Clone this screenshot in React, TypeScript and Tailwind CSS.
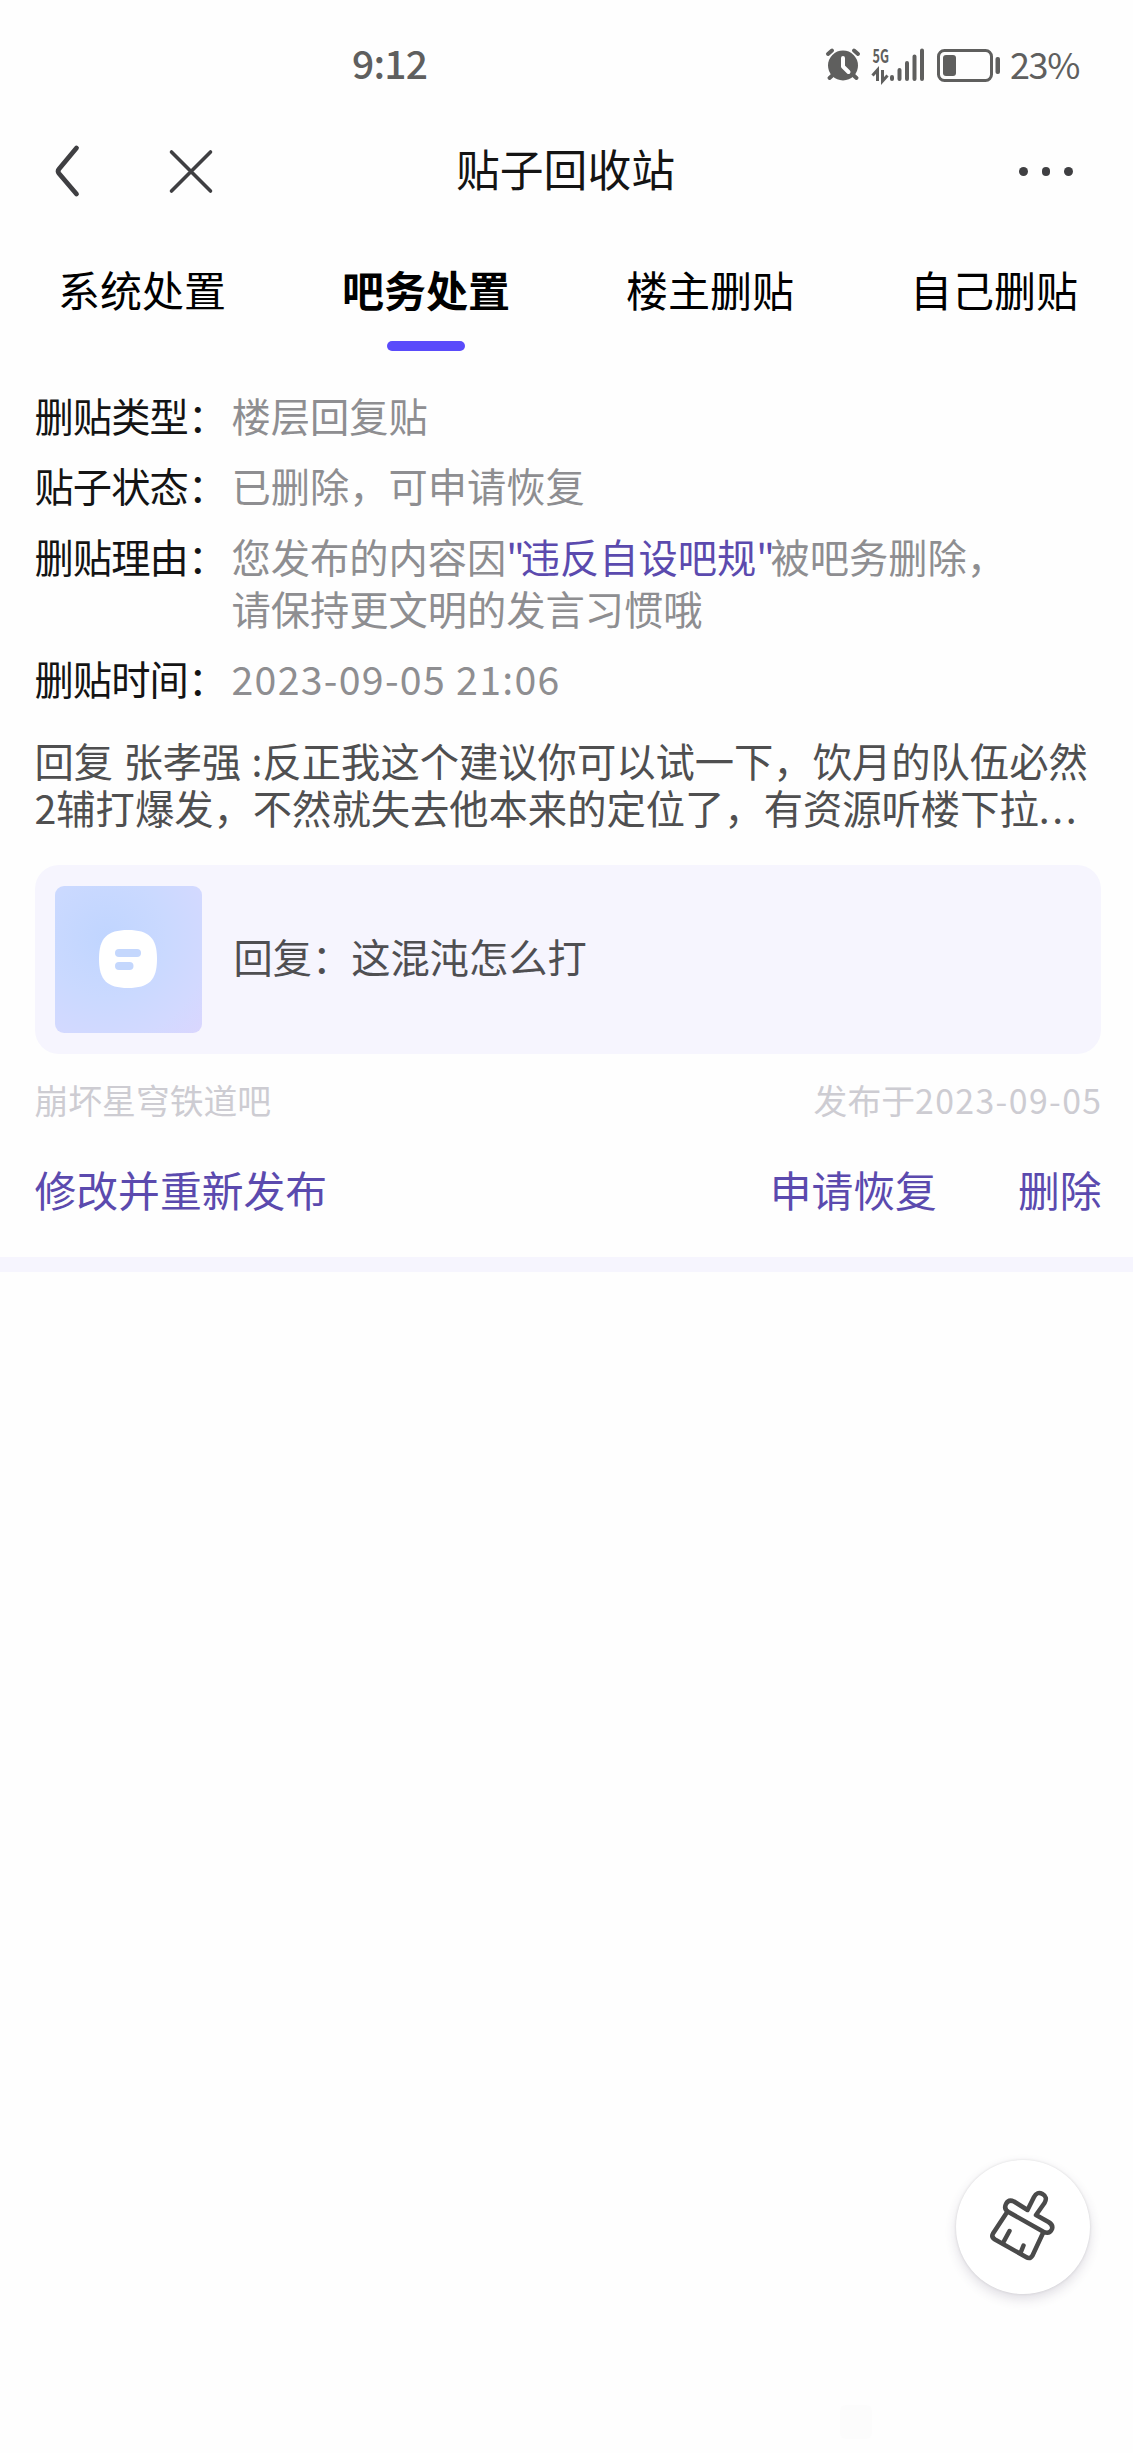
/**
 * @fileoverview Recycle bin page for deleted posts: category tabs, details of
 * the deleted post, and the actions available for it.
 */

import type { ReactNode } from "react";

const TABS = ["系统处置", "吧务处置", "楼主删贴", "自己删贴"];
const ACTIVE_TAB = "吧务处置";

/**
 * System status bar with the clock, alarm, signal and battery.
 */
function StatusBar() {
  return (
    <div className="flex h-[130px] items-center justify-between pr-[54px] pl-[352px] text-[39px] text-[#5f5f5e]">
      <span className="-mt-1.5 font-medium tracking-[-0.8px]">9:12</span>
      <div className="flex items-center">
        <svg width="180" height="60" viewBox="823 34 180 60" fill="none">
          {/* alarm clock */}
          <g stroke="#5f5f5e" strokeWidth="4" strokeLinecap="round">
            <path d="M828 53l4-3.500M858 53l-4-3.500M834 73l-4.500 4M852 73l4.500 4" />
          </g>
          <circle cx="843" cy="64.500" r="15" fill="#5f5f5e" />
          <path
            d="M843 57v8.500l5.500 5.500"
            stroke="#fff"
            strokeWidth="4"
            strokeLinecap="round"
            strokeLinejoin="round"
          />
          {/* mobile network */}
          <text
            x="872.500"
            y="62"
            fill="#5f5f5e"
            fontSize="19"
            fontWeight="700"
            textLength="16.500"
            lengthAdjust="spacingAndGlyphs"
          >
            5G
          </text>
          <path
            d="M872.500 74.500l5-5.500v11M882.500 69v11l5-5.500"
            stroke="#5f5f5e"
            strokeWidth="3"
          />
          <g stroke="#5f5f5e" strokeWidth="4" strokeLinecap="round">
            <path d="M892 76v2M899.500 69v9M907 62v16M914.500 55.500v22.500M922 49.500v28.500" />
          </g>
          {/* battery */}
          <rect
            x="938.500"
            y="49.500"
            width="53"
            height="30"
            rx="6"
            stroke="#5f5f5e"
            strokeWidth="3"
          />
          <rect x="943" y="54" width="13" height="21" rx="3" fill="#5f5f5e" />
          <rect x="995.500" y="56" width="4.500" height="17" rx="2" fill="#5f5f5e" />
        </svg>
        <span className="-mt-1 ml-[7px] w-[69px] text-[36px] tracking-[-1.4px]">
          23%
        </span>
      </div>
    </div>
  );
}

function Header() {
  return (
    <header className="flex h-[83px] items-center justify-between pr-[60px] pl-[52px]">
      <svg
        width="166"
        height="60"
        viewBox="52 141.500 166 60"
        fill="none"
        stroke="#3f3f42"
        strokeLinecap="round"
        strokeLinejoin="round"
      >
        <path d="M76.500 147.500L59 168.500Q57.200 170.700 59 173L76.500 193.500" strokeWidth="4.800" />
        <path d="M171.500 151.500L210.500 190.500M210.500 151.500L171.500 190.500" strokeWidth="3.600" />
      </svg>
      <h1 className="-mt-1.5 text-[43.8px] text-[#141414]">贴子回收站</h1>
      <div className="flex w-[160px] justify-end gap-[14px]">
        <span className="size-[8.500px] rounded-full bg-[#3f3f42]" />
        <span className="size-[8.500px] rounded-full bg-[#3f3f42]" />
        <span className="size-[8.500px] rounded-full bg-[#3f3f42]" />
      </div>
    </header>
  );
}

function Tabs() {
  return (
    <nav className="grid w-[1136px] grid-cols-4 pt-[46px]">
      {TABS.map((tab) => (
        <div key={tab} className="flex flex-col items-center">
          <span
            className={`text-[42px] leading-[60px] text-black ${
              tab === ACTIVE_TAB ? "font-bold" : ""
            }`}
          >
            {tab}
          </span>
          {tab === ACTIVE_TAB && (
            <span className="mt-[22px] h-[10px] w-[78px] rounded-full bg-[#5a4bfb]" />
          )}
        </div>
      ))}
    </nav>
  );
}

/**
 * One labelled line of the deletion details.
 */
function DetailRow({ label, children }: { label: string; children: ReactNode }) {
  return (
    <div className="flex">
      <dt className="w-[197px] shrink-0 text-[#141414]">
        <span className="tracking-[-0.9px]">{label}</span>：
      </dt>
      <dd className="text-[#8e8e91]">{children}</dd>
    </div>
  );
}

function Thumbnail() {
  return (
    <div className="flex size-[147px] items-center justify-center rounded-[9px] bg-[radial-gradient(circle_at_35%_35%,#c0d5ff_0%,#cad9ff_45%,#d2d9ff_75%,#dad6fe_100%)]">
      <svg width="58" height="58" viewBox="0 0 58 58">
        <path
          d="M29 0C50 0 58 8 58 29S50 58 29 58 0 50 0 29 8 0 29 0Z"
          fill="#fff"
        />
        <rect x="16" y="19" width="26" height="8" rx="4" fill="#c4d7fd" />
        <rect x="16" y="32" width="18.500" height="8" rx="4" fill="#c4d7fd" />
      </svg>
    </div>
  );
}

function CleanButton() {
  return (
    <button className="absolute top-[2160px] left-[956px] flex size-[134px] items-center justify-center rounded-full bg-white shadow-[0_5px_12px_rgba(60,50,90,0.16),0_0_3px_rgba(0,0,0,0.12)]">
      <svg
        width="134"
        height="134"
        viewBox="956 2160 134 134"
        fill="none"
        stroke="#4a4a4a"
        strokeWidth="4.500"
        strokeLinecap="round"
        strokeLinejoin="round"
      >
        <path d="M1027.500 2210L1034 2197Q1037 2191 1042.500 2194T1044.500 2203L1036 2215L1048.500 2222Q1054 2225.500 1051.500 2230T1043 2231.500L1008.500 2212Q1003.500 2209 1006 2204T1014 2201.500Z" />
        <path d="M1006.500 2213L993 2233.500Q991 2237 995 2239.500L1026 2257Q1030 2259.500 1032.500 2255.500L1043 2233" />
        <path d="M1003.500 2242L1009.500 2231M1020.500 2253L1023.500 2245.500" />
      </svg>
    </button>
  );
}

export default function App() {
  return (
    <div className="relative h-[2453px] w-[1133px] overflow-hidden bg-[#fefefe] font-['Noto_Sans_CJK_SC',sans-serif]">
      <StatusBar />
      <Header />
      <Tabs />

      <main className="pt-[38px] pl-[34.5px]">
        <dl className="flex flex-col gap-[18.3px] text-[39.25px] leading-[52px]">
          <DetailRow label="删贴类型">楼层回复贴</DetailRow>
          <DetailRow label="贴子状态">已删除，可申请恢复</DetailRow>
          <DetailRow label="删贴理由">
            您发布的内容因
            <span className="text-[#5b4aae]">
              <span className="tracking-[-4.200px]">"</span>违反自设吧规
              <span className="tracking-[-4.200px]">"</span>
            </span>
            被吧务删除，
            <br />
            请保持更文明的发言习惯哦
          </DetailRow>
          <DetailRow label="删贴时间">
            <span className="tracking-[1.3px]">2023-09-05 21:06</span>
          </DetailRow>
        </dl>

        <p className="mt-8 text-[39.3px] leading-[47px] whitespace-nowrap text-[#4f4f50] [word-spacing:1.5px]">
          回复 张孝强 :反正我这个建议你可以试一下，饮月的队伍必然
          <br />
          2辅打爆发，不然就失去他本来的定位了，有资源听楼下拉
          <span className="tracking-[2.6px]">...</span>
        </p>

        <section className="mt-[35px] flex h-[189px] w-[1066px] items-center rounded-[24px] bg-[#f6f5fe] pl-[20px]">
          <Thumbnail />
          <span className="-mt-1.5 ml-8 text-[39.25px] text-[#4f4f52]">
            回复：这混沌怎么打
          </span>
        </section>

        <div className="mt-[23px] flex w-[1068px] justify-between text-[33.8px] leading-[46px] text-[#cdccd2]">
          <span>崩坏星穹铁道吧</span>
          <span>
            发布于<span className="tracking-[1.4px]">2023-09-05</span>
          </span>
        </div>

        <div className="mt-[38px] flex w-[1067px] justify-between text-[41.8px] leading-[56px] text-[#5b4aae]">
          <button>修改并重新发布</button>
          <div className="flex gap-[81px]">
            <button>申请恢复</button>
            <button>删除</button>
          </div>
        </div>
      </main>

      <div className="mt-[40px] h-[15px] bg-[#f6f5fe]" />

      <CleanButton />

      {/* faint floating handle near the bottom edge */}
      <div className="absolute top-[2405px] left-[840px] h-[34px] w-[32px] rounded-md bg-[#fcfcfc]" />
    </div>
  );
}
